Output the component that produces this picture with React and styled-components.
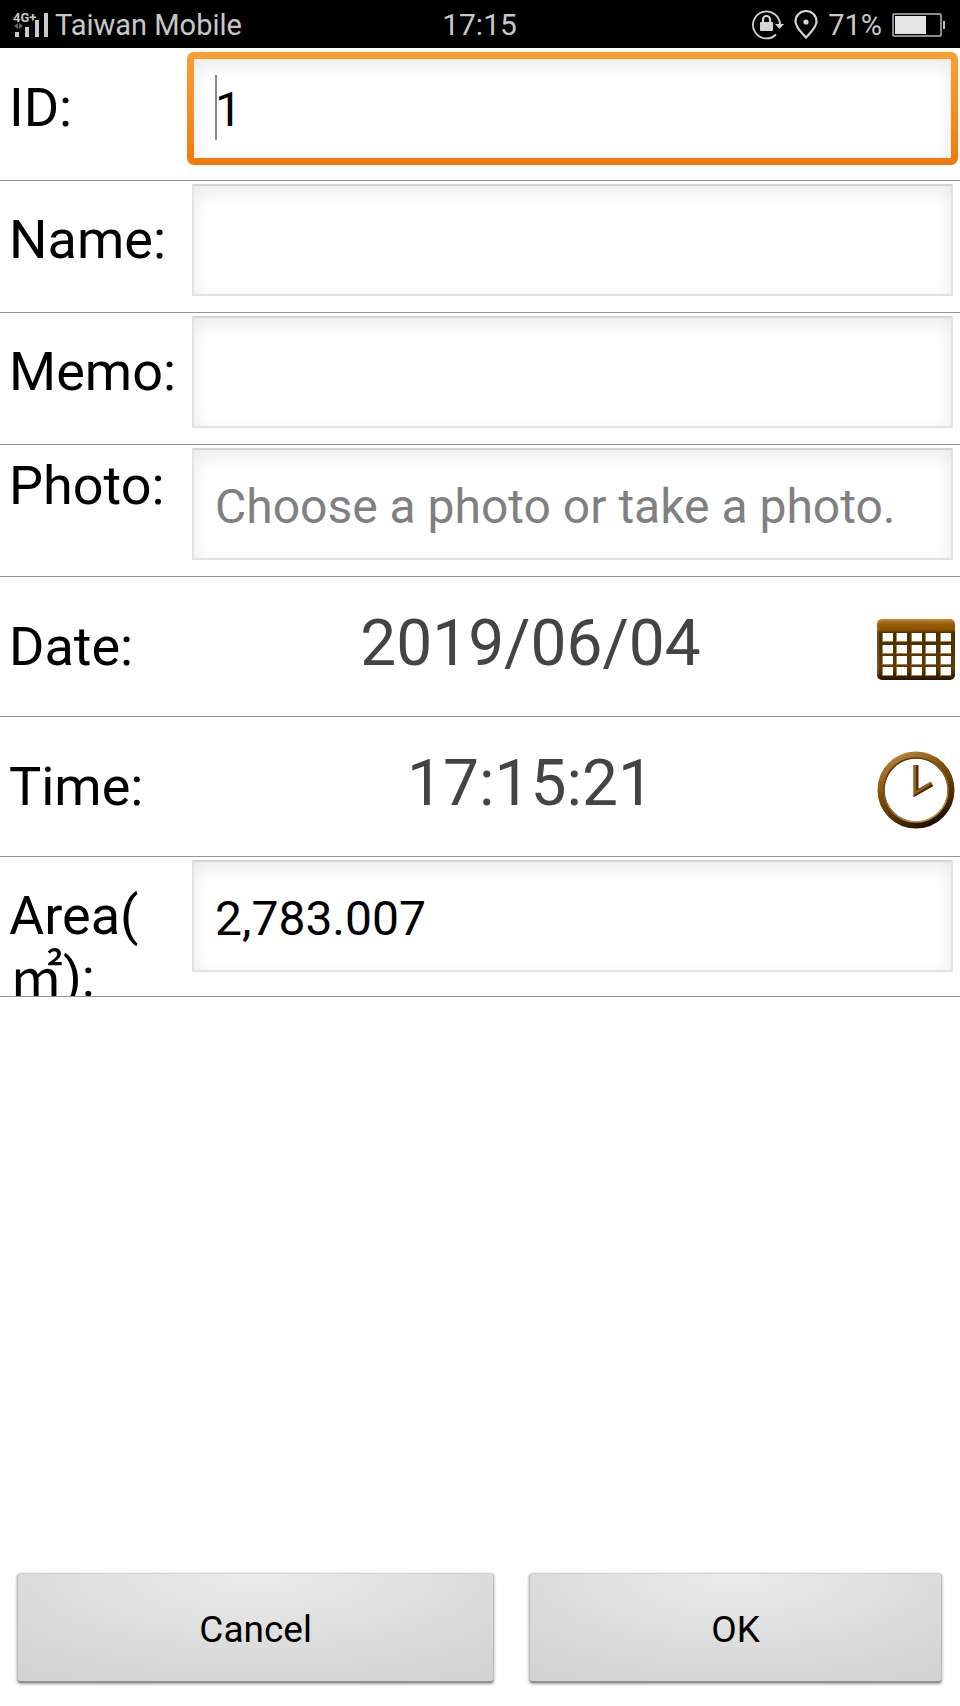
import React, { useState } from "react";

import styled, { createGlobalStyle } from "styled-components";

const GlobalStyle = createGlobalStyle`
  * {
    box-sizing: border-box;
  }
  body {
    margin: 0;
    background: #fff;
    font-family: Roboto, "Noto Sans CJK TC", sans-serif;
  }
`;

const Page = styled.div`
  display: flex;
  flex-direction: column;
  min-height: 100vh;
  background: #fff;
`;

// Status bar
const StatusBar = styled.header`
  display: grid;
  grid-template-columns: 1fr auto 1fr;
  align-items: center;
  height: 48px;
  padding: 1px 14px 0 13px;
  background: #000;
  color: #c8c8c8;
  font-size: 29px;
  line-height: 34px;
`;

const StatusGroup = styled.div`
  display: flex;
  align-items: center;
  justify-content: ${(props) => (props.$end ? "flex-end" : "flex-start")};
  gap: ${(props) => (props.$end ? "10px" : "6px")};

  svg {
    display: block;
    flex: none;
  }
`;

const Clock = styled.span`
  font-size: 30px;
`;

// Form
const Form = styled.form`
  display: flex;
  flex: 1;
  flex-direction: column;
  padding-top: 1px;
`;

const Row = styled.div`
  display: grid;
  grid-template-columns: 183px 1fr;
  align-items: ${(props) => (props.$tall ? "center" : "start")};
  height: ${(props) => (props.$tall || props.$clip ? "140px" : "132px")};
  padding: 0 7px 0 9px;
  border-bottom: 1px solid #949494;
  overflow: ${(props) => (props.$clip ? "hidden" : "visible")};
`;

const Label = styled.label`
  padding-top: ${(props) => props.$top || "0"};
  color: #000;
  font-size: 54px;
  line-height: 62px;
`;

const Input = styled.input`
  display: block;
  width: 100%;
  height: 112px;
  margin-top: 3px;
  padding: 4px 22px 0 21px;
  border: 2px solid #e2e2e2;
  border-top-color: #d4d4d4;
  border-radius: 0;
  background: #fff;
  box-shadow: inset 0 6px 18px rgba(0, 0, 0, 0.09);
  color: #000;
  font-family: inherit;
  font-size: 48px;
  outline: none;

  &::placeholder {
    color: #808080;
    opacity: 1;
  }
`;

const FocusFrame = styled.div`
  position: relative;
  margin: 3px -5px 0;
  padding: 7px;
  border-radius: 7px;
  background: linear-gradient(#fb9f30, #f58a1c 60%, #ee7a0a);

  ${Input} {
    height: 99px;
    margin: 0;
    padding: 2px 16px 0 21px;
    border: none;
  }
`;

const Caret = styled.span`
  position: absolute;
  top: 23px;
  left: 28px;
  width: 2px;
  height: 65px;
  background: #8c8c8c;
`;

const Picker = styled.div`
  display: grid;
  grid-template-columns: 1fr 78px;
  align-items: center;
  gap: 8px;
  margin-right: -2px;
`;

const Value = styled.output`
  padding-bottom: 6px;
  color: #444;
  font-size: 64px;
  line-height: 76px;
  text-align: center;
`;

const IconButton = styled.button`
  display: block;
  padding: 6px 0 0;
  border: none;
  background: none;
  cursor: pointer;

  svg {
    display: block;
  }
`;

// Bottom buttons
const Actions = styled.div`
  display: flex;
  gap: 35px;
  margin-top: auto;
  padding: 0 18px 23px 17px;
`;

const Button = styled.button`
  flex: ${(props) => props.$grow} 1 0;
  height: 110px;
  padding: 4px 0 0;
  border: 1px solid #bcbcbc;
  border-top-color: #d2d2d2;
  border-bottom: 2px solid #929292;
  border-radius: 4px;
  background: radial-gradient(
    ellipse 90% 130% at 50% 0%,
    #ebebeb,
    #dadada 60%,
    #d0d0d0
  );
  box-shadow: 0 1px 3px rgba(0, 0, 0, 0.4);
  color: #000;
  font-family: inherit;
  font-size: 37px;
  cursor: pointer;
`;

function SignalIcon() {
  return (
    <svg width="36" height="28" viewBox="0 0 36 28" fill="#c8c8c8">
      <text
        x="0"
        y="11"
        fontFamily="Roboto, sans-serif"
        fontSize="13"
        fontWeight="700"
      >
        4G+
      </text>
      <path d="M1 15l4-3v6zM10 15l-4-3v6z" fill="#666" />
      <rect x="2" y="21" width="4" height="5" />
      <rect x="12" y="16" width="4" height="10" />
      <rect x="22" y="9" width="4" height="17" />
      <rect x="31" y="2" width="4" height="24" />
    </svg>
  );
}

function RotationLockIcon() {
  return (
    <svg width="32" height="30" viewBox="0 0 32 30" fill="none">
      <path
        d="M28 15A13.500 13.500 0 1 0 24 24.500"
        stroke="#d4d4d4"
        strokeWidth="1.800"
      />
      <path d="M23 14h9l-4.500 5z" fill="#d4d4d4" />
      <rect x="8" y="12" width="13" height="9" rx="1" fill="#d4d4d4" />
      <path
        d="M11 13V9.500a3.500 3.500 0 0 1 7 0V13"
        stroke="#d4d4d4"
        strokeWidth="2.200"
      />
    </svg>
  );
}

function PinIcon() {
  return (
    <svg width="24" height="30" viewBox="0 0 24 30" fill="none">
      <path
        d="M12 27.500C8 23 1.500 17.500 1.500 11.500a10.500 10.500 0 0 1 21 0C22.500 17.500 16 23 12 27.500z"
        stroke="#d4d4d4"
        strokeWidth="2.200"
      />
      <circle cx="12" cy="12" r="2.600" fill="#d4d4d4" />
    </svg>
  );
}

function BatteryIcon() {
  return (
    <svg width="54" height="24" viewBox="0 0 54 24">
      <rect
        x="1"
        y="1"
        width="48"
        height="22"
        rx="1"
        fill="none"
        stroke="#bbb"
        strokeWidth="1.500"
      />
      <rect x="3" y="3" width="31" height="18" fill="#e4e4e4" />
      <rect x="51" y="8" width="2" height="8" fill="#bbb" />
    </svg>
  );
}

function CalendarIcon() {
  const columns = [5, 19, 34, 48, 63];
  const rows = [14, 26, 37, 48];

  return (
    <svg width="78" height="62" viewBox="0 0 78 62">
      <defs>
        <linearGradient id="calendarFill" x1="0" y1="0" x2="0" y2="1">
          <stop offset="0" stopColor="#b98535" />
          <stop offset="0.080" stopColor="#9a5f08" />
          <stop offset="0.180" stopColor="#8a5200" />
          <stop offset="0.230" stopColor="#4a2c00" />
          <stop offset="0.800" stopColor="#5e3c0c" />
          <stop offset="1" stopColor="#251500" />
        </linearGradient>
      </defs>
      <rect width="78" height="61" rx="5" fill="url(#calendarFill)" />
      <path
        d="M1 56V6q0-5 5-5h66"
        fill="none"
        stroke="#c79a58"
        strokeOpacity="0.600"
      />
      {rows.map((y) =>
        columns.map((x) => (
          <g key={`${x}-${y}`}>
            <rect x={x} y={y} width="11" height="9" fill="#a9833f" />
            <rect x={x + 1} y={y} width="10" height="8" fill="#fff" />
          </g>
        ))
      )}
    </svg>
  );
}

function ClockIcon() {
  return (
    <svg width="78" height="78" viewBox="0 0 78 78" fill="none">
      <defs>
        <linearGradient id="clockRing" x1="0.200" y1="0" x2="0.700" y2="1">
          <stop offset="0" stopColor="#b88238" />
          <stop offset="0.400" stopColor="#7f4c04" />
          <stop offset="0.800" stopColor="#4a2a00" />
          <stop offset="1" stopColor="#1e1000" />
        </linearGradient>
        <linearGradient id="clockEdge" x1="0" y1="0" x2="0.500" y2="1">
          <stop offset="0" stopColor="#3a2000" />
          <stop offset="1" stopColor="#b99055" />
        </linearGradient>
      </defs>
      <circle cx="39" cy="39" r="35" stroke="url(#clockRing)" strokeWidth="7" />
      <circle
        cx="39"
        cy="39"
        r="32"
        stroke="url(#clockEdge)"
        strokeWidth="1.500"
      />
      <path d="M39 14v28l16-9" stroke="#4a2b02" strokeWidth="5" />
      <path d="M38 14v28l16-10" stroke="#94611a" strokeWidth="2.500" />
    </svg>
  );
}

function App() {
  const [values, setValues] = useState({
    id: "1",
    name: "",
    memo: "",
    photo: "",
    area: "2,783.007",
  });

  const bind = (key) => ({
    id: key,
    type: "text",
    autoComplete: "off",
    value: values[key],
    onChange: (e) => setValues((prev) => ({ ...prev, [key]: e.target.value })),
  });

  return (
    <Page>
      <GlobalStyle />
      <StatusBar>
        <StatusGroup>
          <SignalIcon />
          <span>Taiwan Mobile</span>
        </StatusGroup>
        <Clock>17:15</Clock>
        <StatusGroup $end>
          <RotationLockIcon />
          <PinIcon />
          <span>71%</span>
          <BatteryIcon />
        </StatusGroup>
      </StatusBar>

      <Form onSubmit={(e) => e.preventDefault()}>
        <Row>
          <Label htmlFor="id" $top="28px">
            ID:
          </Label>
          <FocusFrame>
            <Input {...bind("id")} />
            <Caret />
          </FocusFrame>
        </Row>
        <Row>
          <Label htmlFor="name" $top="28px">
            Name:
          </Label>
          <Input {...bind("name")} />
        </Row>
        <Row>
          <Label htmlFor="memo" $top="28px">
            Memo:
          </Label>
          <Input {...bind("memo")} />
        </Row>
        <Row>
          <Label htmlFor="photo" $top="10px">
            Photo:
          </Label>
          <Input
            {...bind("photo")}
            placeholder="Choose a photo or take a photo."
          />
        </Row>
        <Row $tall>
          <Label htmlFor="date">Date:</Label>
          <Picker>
            <Value id="date">2019/06/04</Value>
            <IconButton type="button" aria-label="Choose date">
              <CalendarIcon />
            </IconButton>
          </Picker>
        </Row>
        <Row $tall>
          <Label htmlFor="time">Time:</Label>
          <Picker>
            <Value id="time">17:15:21</Value>
            <IconButton type="button" aria-label="Choose time">
              <ClockIcon />
            </IconButton>
          </Picker>
        </Row>
        <Row $clip>
          <Label htmlFor="area" $top="28px">
            Area(
            <br />
            ㎡):
          </Label>
          <Input {...bind("area")} />
        </Row>

        <Actions>
          <Button type="button" $grow={478}>
            Cancel
          </Button>
          <Button type="submit" $grow={413}>
            OK
          </Button>
        </Actions>
      </Form>
    </Page>
  );
}

export default App;
